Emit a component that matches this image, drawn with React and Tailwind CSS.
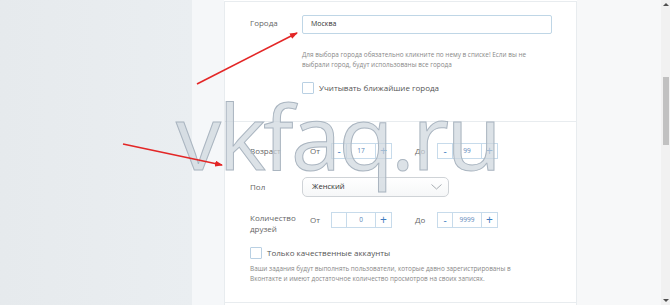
import React from "react";

const font = { fontFamily: "'Open Sans', 'Noto Sans', sans-serif" };

const Stepper = ({ value, noMinus }) => (
  <div className="flex h-[16px] border border-[#c7dbeb] bg-white text-[#3f7cc0]">
    <div className="w-[15px] flex items-center justify-center text-[10px] leading-none border-r border-[#c7dbeb]">
      {noMinus ? "" : "-"}
    </div>
    <div className="w-[29px] flex items-center justify-center text-[6.5px] text-[#5a86b8] border-r border-[#c7dbeb]">
      {value}
    </div>
    <div className="w-[15px] flex items-center justify-center text-[12px] leading-none">+</div>
  </div>
);

const Checkbox = ({ label, className = "" }) => (
  <label className={`flex items-center gap-[5px] ${className}`}>
    <span className="w-[12px] h-[12px] border border-[#b9d0e3] rounded-[1px] bg-white" />
    <span className="text-[8px] leading-[12px] text-[#555]">{label}</span>
  </label>
);

export default function App() {
  return (
    <div className="relative w-[670px] h-[305px] flex overflow-hidden bg-white" style={font}>
      {/* left backdrop */}
      <div className="w-[192px] bg-gradient-to-r from-[#e6eaed] to-[#eaeef1]" />
      <div className="w-[32px] bg-[#f5f7f9]" />

      {/* form panel */}
      <div className="w-[353px] mt-px border-t border-l border-r border-[#e8ecef] bg-white flex flex-col">
        {/* cities */}
        <div className="h-[120px] border-b border-[#e8ecef] pl-[25px] pr-[24px] pt-[13px]">
          <div className="flex">
            <div className="w-[52px] text-[8px] leading-[12px] text-[#666] pt-[2px]">Города</div>
            <div className="flex-1">
              <div className="h-[19px] border border-[#bfd6e6] rounded-[2px] flex items-center pl-[8px] text-[7px] text-[#333]">
                Москва
              </div>
              <p className="mt-[16px] pr-[20px] text-[6.4px] leading-[9.5px] text-[#888]">
                Для выбора города обязательно кликните по нему в списке! Если вы не выбрали город, будут использованы все города
              </p>
              <Checkbox label="Учитывать ближайшие города" className="mt-[13px]" />
            </div>
          </div>
        </div>

        {/* filters */}
        <div className="flex-1 pl-[25px] pr-[24px] pt-[21px]">
          <div className="flex items-center h-[16px]">
            <div className="w-[60px] text-[8px] text-[#666]">Возраст</div>
            <div className="w-[21px] text-[8px] text-[#666]">От</div>
            <Stepper value="17" />
            <div className="w-[45px] pl-[23px] text-[8px] text-[#666]">До</div>
            <Stepper value="99" />
          </div>

          <div className="flex items-center mt-[18px]">
            <div className="w-[52px] text-[8px] text-[#666]">Пол</div>
            <div className="w-[147px] h-[20px] border border-[#cfd3d7] rounded-[5px] bg-gradient-to-b from-white to-[#f6f7f8] flex items-center justify-between pl-[9px] pr-[6px]">
              <span className="text-[7.6px] text-[#333]">Женский</span>
              <svg width="11" height="6" viewBox="0 0 11 6" fill="none">
                <path d="M0.5 0.5 L5.5 5 L10.5 0.5" stroke="#a8adb3" strokeWidth="1" />
              </svg>
            </div>
          </div>

          <div className="flex mt-[15px]">
            <div className="w-[60px] text-[8px] leading-[11px] text-[#666]">
              Количество
              <br />
              друзей
            </div>
            <div className="flex items-center h-[16px]">
              <div className="w-[21px] text-[8px] text-[#666]">От</div>
              <Stepper value="0" noMinus />
              <div className="w-[45px] pl-[23px] text-[8px] text-[#666]">До</div>
              <Stepper value="9999" />
            </div>
          </div>

          <Checkbox label="Только качественные аккаунты" className="mt-[13px]" />
          <p className="mt-[5px] pr-[20px] text-[6.4px] leading-[9.5px] text-[#888]">
            Ваши задания будут выполнять пользователи, которые давно зарегистрированы в Вконтакте и имеют достаточное количество просмотров на своих записях.
          </p>
        </div>
        <div className="h-[3px] border-t border-[#e8ecef]" />
      </div>

      {/* right backdrop */}
      <div className="flex-1 bg-[#f7f8f9]" />

      {/* scrollbar */}
      <div className="w-[9px] bg-[#f1f1f1] flex flex-col items-center">
        <div className="h-[9px] flex items-center justify-center">
          <span className="w-0 h-0 border-x-[3px] border-x-transparent border-b-[3px] border-b-[#505050]" />
        </div>
        <div className="mt-[68px] w-[6px] h-[68px] bg-[#c1c1c1]" />
        <div className="flex-1" />
        <div className="h-[9px] flex items-center justify-center">
          <span className="w-0 h-0 border-x-[3px] border-x-transparent border-t-[3px] border-t-[#505050]" />
        </div>
      </div>

      {/* watermark */}
      <div
        className="absolute left-[176px] top-[90px] text-[90px] leading-none font-normal tracking-[-2.5px] text-[#cdd5dd]/70 [-webkit-text-stroke:1px_#aab5c0] pointer-events-none select-none"
        style={{ fontFamily: "'Open Sans', sans-serif" }}
      >
        vkfaq.ru
      </div>

      {/* arrows */}
      <svg className="absolute inset-0 pointer-events-none" width="670" height="305">
        <defs>
          <marker id="ah" markerWidth="8" markerHeight="6" refX="7" refY="3" orient="auto" markerUnits="userSpaceOnUse">
            <path d="M0 0 L8 3 L0 6 Z" fill="#e32626" />
          </marker>
        </defs>
        <line x1="197" y1="84" x2="297" y2="33" stroke="#e32626" strokeWidth="1.6" markerEnd="url(#ah)" />
        <line x1="123" y1="144" x2="222" y2="165" stroke="#e32626" strokeWidth="1.6" markerEnd="url(#ah)" />
      </svg>
    </div>
  );
}
